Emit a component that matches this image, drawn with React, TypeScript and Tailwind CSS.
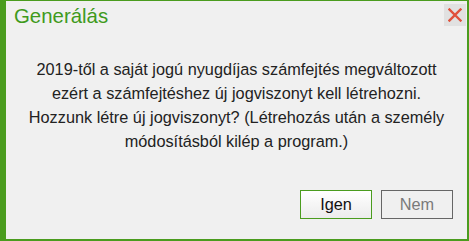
export default function App() {
  return (
    <div
      className="w-[469px] h-[241px] bg-[#f0f0f0] border-l-[6px] border-t border-r-2 border-b-2 border-[#4a9c1e] flex flex-col"
      style={{ fontFamily: '"Liberation Sans", Arial, sans-serif' }}
    >
      {/* header */}
      <div className="h-[27px] flex items-start justify-between">
        <div className="pl-2 pt-[3px] text-[20.4px] leading-[24px] text-[#3f9a1c]">
          Generálás
        </div>
        <button className="mt-[3px] mr-px w-[22px] h-[22px] bg-[#e1e1e1] flex items-center justify-center">
          <svg width="14" height="14" viewBox="0 0 14 14">
            <path d="M1.5 1.5 L12.5 12.5 M12.5 1.5 L1.5 12.5" stroke="#e0513b" strokeWidth="2.4" strokeLinecap="square" />
          </svg>
        </button>
      </div>

      {/* message */}
      <div className="pt-[29px] text-center text-[16.3px] leading-[24px] text-[#222]">
        <p>2019-től a saját jogú nyugdíjas számfejtés megváltozott</p>
        <p>ezért a számfejtéshez új jogviszonyt kell létrehozni.</p>
        <p>Hozzunk létre új jogviszonyt? (Létrehozás után a személy</p>
        <p>módosításból kilép a program.)</p>
      </div>

      {/* buttons */}
      <div className="mt-[37px] flex justify-end gap-[9px] pr-[14px]">
        <button className="w-[72px] h-[29px] border border-[#4a9c1e] bg-gradient-to-b from-white to-[#ececec] text-[16.3px] text-[#111]">
          Igen
        </button>
        <button className="w-[72px] h-[29px] border border-[#666] bg-[#f0f0f0] text-[16.3px] text-[#7a7a7a]">
          Nem
        </button>
      </div>
    </div>
  );
}
